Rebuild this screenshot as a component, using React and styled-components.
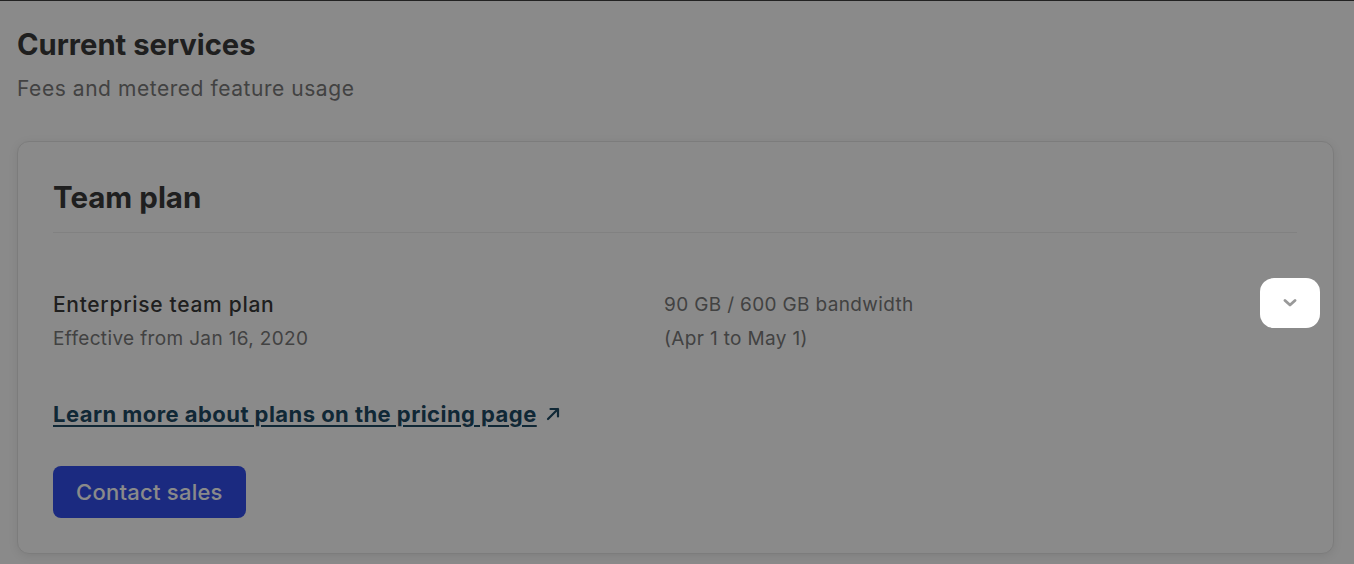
import React from "react";
import styled, { createGlobalStyle } from "styled-components";

const GlobalStyle = createGlobalStyle`
  * { box-sizing: border-box; }
  body {
    margin: 0;
    font-family: Inter, "Noto Sans", sans-serif;
    background: #fff;
    color: #333;
  }
`;

const Page = styled.div`
  position: relative;
  min-height: 100vh;
  padding: 26px 20px 12px 17px;
  border-top: 1px solid #222;
`;

const Overlay = styled.div`
  position: absolute;
  inset: 0;
  background: rgba(0, 0, 0, 0.46);
  z-index: 1;
  pointer-events: none;
`;

const Heading = styled.h1`
  margin: 0;
  font-size: 29.2px;
  line-height: 36px;
  font-weight: 700;
  color: #3a3a3a;
`;

const Subtitle = styled.p`
  margin: 12px 0 0;
  font-size: 21px;
  line-height: 28px;
  letter-spacing: 0.55px;
  color: #7a7a7a;
`;

const Card = styled.section`
  margin-top: 38px;
  background: #fff;
  border: 1px solid #e6e6e6;
  border-radius: 12px;
  box-shadow: 0 2px 10px rgba(0, 0, 0, 0.09);
  padding: 37px 36px 35px 35px;
`;

const CardTitle = styled.h2`
  margin: 0;
  padding-bottom: 17px;
  font-size: 29.5px;
  line-height: 36px;
  font-weight: 700;
  color: #3a3a3a;
  border-bottom: 1px solid #eee;
`;

const PlanRow = styled.div`
  display: grid;
  grid-template-columns: 611px 1fr auto;
  align-items: start;
  margin: 59px -23px 0 0;
`;

const Column = styled.div`
  display: flex;
  flex-direction: column;
  gap: 8px;
`;

const PlanName = styled.div`
  font-size: 21px;
  line-height: 26px;
  font-weight: 500;
  letter-spacing: 0.7px;
  color: #3a3a3a;
`;

const Detail = styled.div`
  font-size: 19px;
  line-height: 26px;
  letter-spacing: 0.35px;
  color: #7a7a7a;
`;

const ToggleButton = styled.button`
  position: relative;
  z-index: 2;
  margin-top: -14px;
  width: 60px;
  height: 50px;
  border: none;
  border-radius: 14px;
  background: #fff;
  display: flex;
  align-items: center;
  justify-content: center;
  cursor: pointer;
`;

const PricingLink = styled.a`
  display: inline-flex;
  align-items: center;
  gap: 9px;
  margin-top: 48px;
  font-size: 22px;
  line-height: 28px;
  font-weight: 700;
  letter-spacing: 0.45px;
  color: #1e4a64;
  text-decoration: underline;
  text-underline-offset: 3px;
  text-decoration-thickness: 2px;
`;

const Actions = styled.div`
  margin-top: 38px;
`;

const PrimaryButton = styled.button`
  height: 52px;
  padding: 0 23px;
  border: none;
  border-radius: 8px;
  background: #324eed;
  color: #fff;
  font-family: inherit;
  font-size: 22px;
  font-weight: 500;
  letter-spacing: 0.25px;
  cursor: pointer;
`;

const ChevronDown = () => (
  <svg width="14" height="8" viewBox="0 0 14 8" fill="none">
    <path
      d="M2 1.5 L7 6 L12 1.5"
      stroke="#999"
      strokeWidth="2.8"
      strokeLinecap="round"
      strokeLinejoin="round"
    />
  </svg>
);

const ArrowUpRight = () => (
  <svg width="14" height="14" viewBox="0 0 14 14" fill="none">
    <path
      d="M2 12 L12 2 M4.5 2 H12 V9.5"
      stroke="currentColor"
      strokeWidth="2.2"
      strokeLinecap="round"
      strokeLinejoin="round"
    />
  </svg>
);

export default function App() {
  return (
    <>
      <GlobalStyle />
      <Page>
        <Heading>Current services</Heading>
        <Subtitle>Fees and metered feature usage</Subtitle>
        <Card>
          <CardTitle>Team plan</CardTitle>
          <PlanRow>
            <Column>
              <PlanName>Enterprise team plan</PlanName>
              <Detail>Effective from Jan 16, 2020</Detail>
            </Column>
            <Column>
              <Detail>90 GB / 600 GB bandwidth</Detail>
              <Detail>(Apr 1 to May 1)</Detail>
            </Column>
            <ToggleButton aria-label="Expand">
              <ChevronDown />
            </ToggleButton>
          </PlanRow>
          <PricingLink href="#pricing">
            Learn more about plans on the pricing page
            <ArrowUpRight />
          </PricingLink>
          <Actions>
            <PrimaryButton>Contact sales</PrimaryButton>
          </Actions>
        </Card>
        <Overlay />
      </Page>
    </>
  );
}
